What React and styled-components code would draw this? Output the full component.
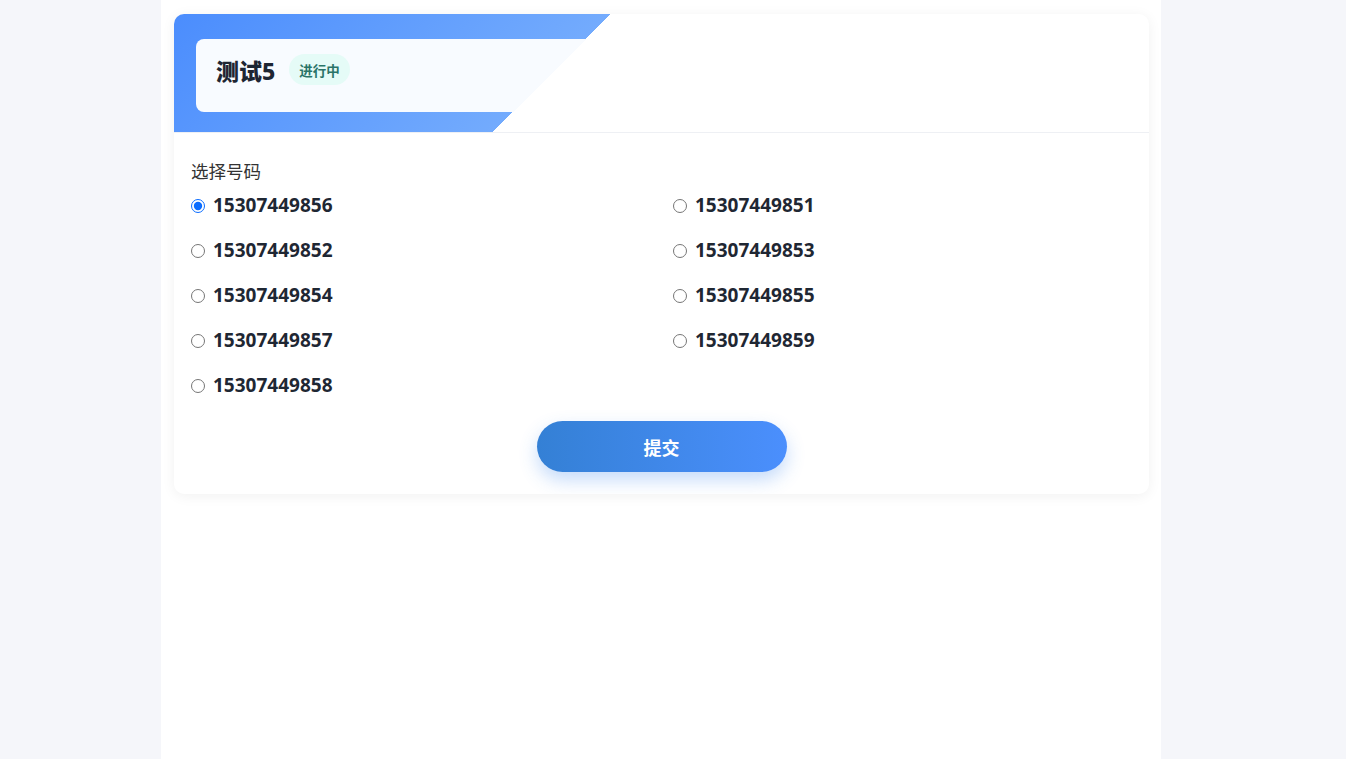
import React, { useState } from "react";
import styled, { createGlobalStyle } from "styled-components";

const GlobalStyle = createGlobalStyle`
   html, body {
      margin: 0;
      padding: 0;
      background: #f5f6fa;
      font-family: "Noto Sans", "Noto Sans CJK SC", sans-serif;
   }
`;

const Page = styled.div`
   width: 1000px;
   min-height: 759px;
   margin: 0 0 0 161px;
   background: #fff;
   padding: 14px 12px 14px 13px;
   box-sizing: border-box;
`;

const Card = styled.div`
   background: #fff;
   border-radius: 10px;
   box-shadow: 0 2px 14px rgba(0, 0, 0, 0.06);
   overflow: hidden;
`;

const Header = styled.div`
   height: 119px;
   padding: 25px 22px;
   box-sizing: border-box;
   border-bottom: 1px solid #eef0f4;
   background: linear-gradient(135deg, #4b8dfd 0, #73abfd 309px, transparent 309px);
`;

const TitleBox = styled.div`
   height: 73px;
   box-sizing: border-box;
   display: flex;
   align-items: center;
   gap: 14px;
   padding: 0 20px 12px;
   border-radius: 8px;
   background: linear-gradient(135deg, #f8fbff 276px, transparent 276px);
`;

const Title = styled.h1`
   margin: 0;
   font-size: 23px;
   font-weight: 800;
   color: #1e2633;
   font-family: "Noto Sans", "Noto Sans CJK SC", sans-serif;
`;

const Badge = styled.span`
   display: inline-flex;
   align-items: center;
   height: 31px;
   padding: 0 10px;
   border-radius: 16px;
   background: #e5fbf7;
   color: #2a7468;
   font-size: 13.5px;
   font-weight: 600;
`;

const Body = styled.div`
   padding: 27px 17px 22px;
`;

const Label = styled.div`
   font-size: 17.5px;
   color: #333;
   line-height: 22px;
`;

const Options = styled.div`
   display: grid;
   grid-template-columns: 482px 1fr;
   grid-auto-rows: 45px;
`;

const Option = styled.label`
   display: flex;
   align-items: center;
   gap: 8px;
   cursor: pointer;
   font-size: 19px;
   font-weight: 700;
   color: #1f2733;
`;

const Radio = styled.input`
   width: 14px;
   height: 14px;
   margin: 3px 0 0 0;
   accent-color: #0a6cff;
`;

const Footer = styled.div`
   display: flex;
   justify-content: center;
   margin-top: 14px;
`;

const Submit = styled.button`
   width: 250px;
   height: 51px;
   border: none;
   border-radius: 26px;
   background: linear-gradient(90deg, #3480d5, #4b8ffd);
   box-shadow: 0 8px 18px rgba(64, 135, 240, 0.3);
   color: #fff;
   font-size: 18px;
   font-weight: 700;
   font-family: "Noto Sans CJK SC", sans-serif;
   cursor: pointer;
`;

const numbers = [
   "15307449856",
   "15307449851",
   "15307449852",
   "15307449853",
   "15307449854",
   "15307449855",
   "15307449857",
   "15307449859",
   "15307449858",
];

export default function App() {
   const [picked, setPicked] = useState(numbers[0]);

   return (
      <>
         <GlobalStyle />
         <Page>
            <Card>
               <Header>
                  <TitleBox>
                     <Title>测试5</Title>
                     <Badge>进行中</Badge>
                  </TitleBox>
               </Header>
               <Body>
                  <Label>选择号码</Label>
                  <Options>
                     {numbers.map((n) => (
                        <Option key={n}>
                           <Radio type="radio" name="phone" checked={picked === n} onChange={() => setPicked(n)} />
                           {n}
                        </Option>
                     ))}
                  </Options>
                  <Footer>
                     <Submit>提交</Submit>
                  </Footer>
               </Body>
            </Card>
         </Page>
      </>
   );
}
